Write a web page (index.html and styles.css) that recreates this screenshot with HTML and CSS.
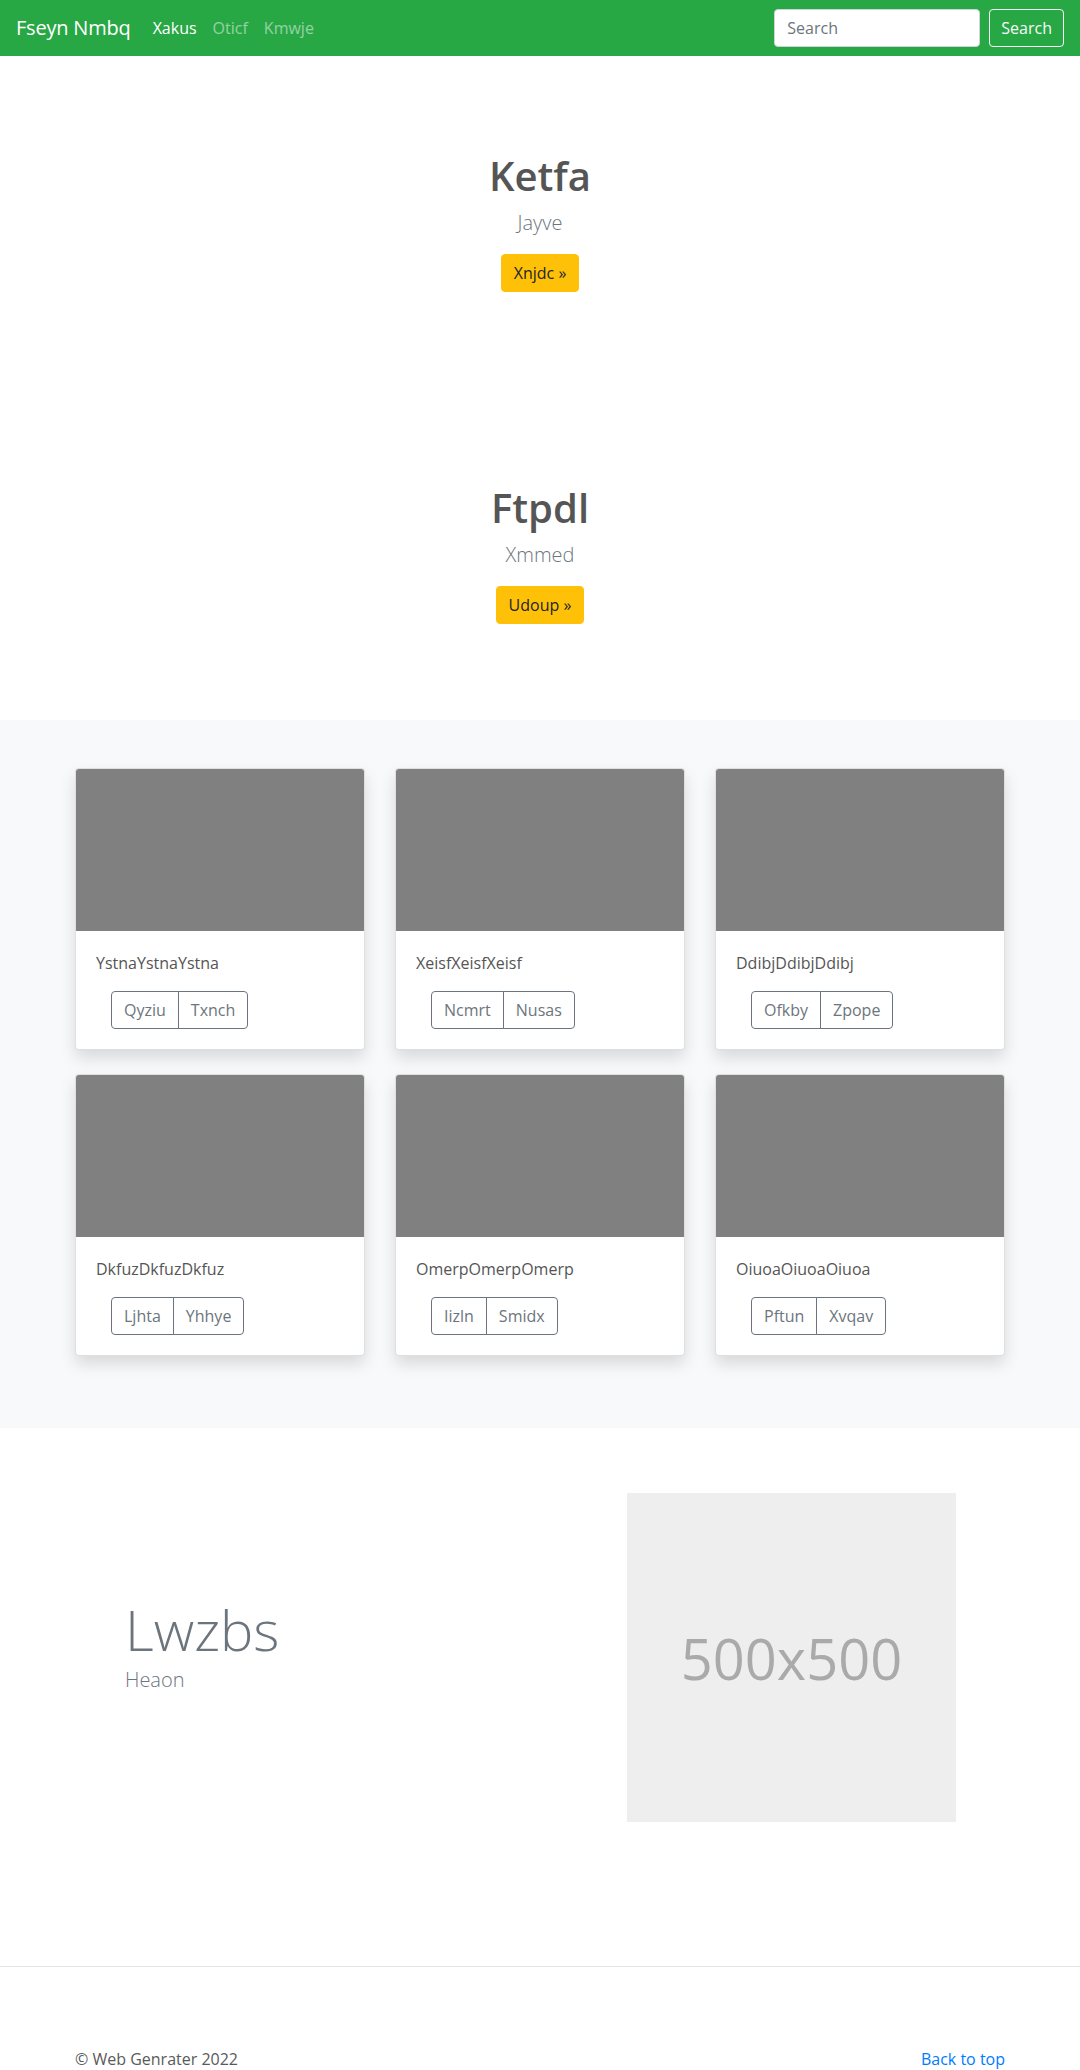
FILE: index.html
```html
<!doctype html>
<html lang="en">
  <head>
    <meta charset="UTF-8" />
    <meta name="viewport" content="width=device-width, initial-scale=1.0" />
    <title>Fseyn Nmbq</title>
    <link rel="stylesheet" href="styles.css">
  </head>
  <body>
    <header class="navbar">
      <a class="brand" href="#">Fseyn Nmbq</a>
      <nav class="nav-links">
        <a class="active" href="#">Xakus</a>
        <a href="#">Oticf</a>
        <a href="#">Kmwje</a>
      </nav>
      <form class="search">
        <input type="text" placeholder="Search">
        <button type="button">Search</button>
      </form>
    </header>

    <main>
      <section class="hero">
        <h1>Ketfa</h1>
        <p class="lead">Jayve</p>
        <a class="btn-warning" href="#">Xnjdc &raquo;</a>
      </section>

      <section class="hero">
        <h1>Ftpdl</h1>
        <p class="lead">Xmmed</p>
        <a class="btn-warning" href="#">Udoup &raquo;</a>
      </section>

      <section class="album">
        <div class="container card-grid">
          <div class="card">
            <div class="thumb"></div>
            <div class="card-body">
              <p class="card-text">YstnaYstnaYstna</p>
              <div class="btn-group"><button>Qyziu</button><button>Txnch</button></div>
            </div>
          </div>
          <div class="card">
            <div class="thumb"></div>
            <div class="card-body">
              <p class="card-text">XeisfXeisfXeisf</p>
              <div class="btn-group"><button>Ncmrt</button><button>Nusas</button></div>
            </div>
          </div>
          <div class="card">
            <div class="thumb"></div>
            <div class="card-body">
              <p class="card-text">DdibjDdibjDdibj</p>
              <div class="btn-group"><button>Ofkby</button><button>Zpope</button></div>
            </div>
          </div>
          <div class="card">
            <div class="thumb"></div>
            <div class="card-body">
              <p class="card-text">DkfuzDkfuzDkfuz</p>
              <div class="btn-group"><button>Ljhta</button><button>Yhhye</button></div>
            </div>
          </div>
          <div class="card">
            <div class="thumb"></div>
            <div class="card-body">
              <p class="card-text">OmerpOmerpOmerp</p>
              <div class="btn-group"><button>Iizln</button><button>Smidx</button></div>
            </div>
          </div>
          <div class="card">
            <div class="thumb"></div>
            <div class="card-body">
              <p class="card-text">OiuoaOiuoaOiuoa</p>
              <div class="btn-group"><button>Pftun</button><button>Xvqav</button></div>
            </div>
          </div>
        </div>
      </section>

      <section class="container featurette">
        <div class="featurette-text">
          <h2>Lwzbs</h2>
          <p class="lead">Heaon</p>
        </div>
        <div class="placeholder">500x500</div>
      </section>

      <hr class="divider">

      <footer class="container footer">
        <p>&copy; Web Genrater 2022</p>
        <a href="#">Back to top</a>
      </footer>
    </main>
  </body>
</html>
```

FILE: styles.css
```css
* {
  box-sizing: border-box;
}

body {
  margin: 0;
  font-family: "Open Sans", "Noto Sans", sans-serif;
  font-size: 16px;
  line-height: 1.5;
  color: #5a5a5a;
  background: #fff;
}

a {
  text-decoration: none;
}

.container {
  width: 930px;
  margin: 0 auto;
}

/* navbar */
.navbar {
  display: flex;
  align-items: center;
  height: 56px;
  padding: 8px 16px;
  background-color: #28a745;
}

.brand {
  font-size: 20px;
  line-height: 30px;
  padding: 5px 0;
  margin-right: 14px;
  color: #fff;
  letter-spacing: -0.2px;
}

.nav-links {
  display: flex;
}

.nav-links a {
  padding: 8px;
  color: rgba(255, 255, 255, 0.5);
}

.nav-links a.active {
  color: #fff;
}

.search {
  display: flex;
  margin-left: auto;
}

.search input {
  width: 206px;
  height: 38px;
  padding: 6px 12px;
  margin-right: 9px;
  font: inherit;
  color: #495057;
  border: 1px solid #ced4da;
  border-radius: 4px;
}

.search input::placeholder {
  color: #6c757d;
}

.search button {
  height: 38px;
  padding: 6px 11px;
  font: inherit;
  color: #f8f9fa;
  background: transparent;
  border: 1px solid #f8f9fa;
  border-radius: 4px;
}

/* hero blocks */
.hero {
  display: flex;
  flex-direction: column;
  align-items: center;
  padding: 96px 0;
  text-align: center;
}

.hero h1 {
  margin: 0 0 8px;
  font-size: 40px;
  line-height: 1.2;
  font-weight: 600;
  color: #555;
}

.lead {
  margin: 0 0 16px;
  font-size: 20px;
  font-weight: 300;
  line-height: 30px;
  color: #6c757d;
}

.btn-warning {
  display: inline-block;
  padding: 6px 12px;
  line-height: 24px;
  color: #212529;
  background-color: #ffc107;
  border: 1px solid #ffc107;
  border-radius: 4px;
}

/* album */
.album {
  padding: 48px 0 72px;
  background-color: #f8f9fa;
}

.card-grid {
  display: grid;
  grid-template-columns: repeat(3, 1fr);
  column-gap: 30px;
  row-gap: 24px;
}

.card {
  overflow: hidden;
  background: #fff;
  border: 1px solid rgba(0, 0, 0, 0.125);
  border-radius: 4px;
  box-shadow: 0 8px 16px rgba(0, 0, 0, 0.13);
}

.thumb {
  height: 162px;
  background-color: #808080;
}

.card-body {
  padding: 20px;
}

.card-text {
  margin: 0 0 16px;
  color: #555;
}

.btn-group {
  display: flex;
  margin-left: 15px;
}

.btn-group button {
  padding: 6px 12px;
  font: inherit;
  line-height: 24px;
  color: #6c757d;
  background: transparent;
  border: 1px solid #6c757d;
}

.btn-group button:first-child {
  border-radius: 4px 0 0 4px;
}

.btn-group button:last-child {
  margin-left: -1px;
  border-radius: 0 4px 4px 0;
}

/* featurette */
.featurette {
  display: flex;
  align-items: center;
  justify-content: space-between;
  padding: 65px 49px 64px 50px;
}

.featurette h2 {
  margin: 0 0 2px;
  font-size: 56px;
  font-weight: 300;
  line-height: 1.2;
  color: #6c757d;
}

.featurette .lead {
  margin-bottom: 24px;
}

.placeholder {
  display: flex;
  align-items: center;
  justify-content: center;
  width: 329px;
  height: 329px;
  font-size: 56px;
  color: #aaa;
  background-color: #eee;
}

/* footer */
.divider {
  margin: 80px 0;
  border: 0;
  border-top: 1px solid rgba(0, 0, 0, 0.1);
}

.footer {
  display: flex;
  justify-content: space-between;
}

.footer p {
  margin: 0;
}

.footer a {
  color: #007bff;
}
```
